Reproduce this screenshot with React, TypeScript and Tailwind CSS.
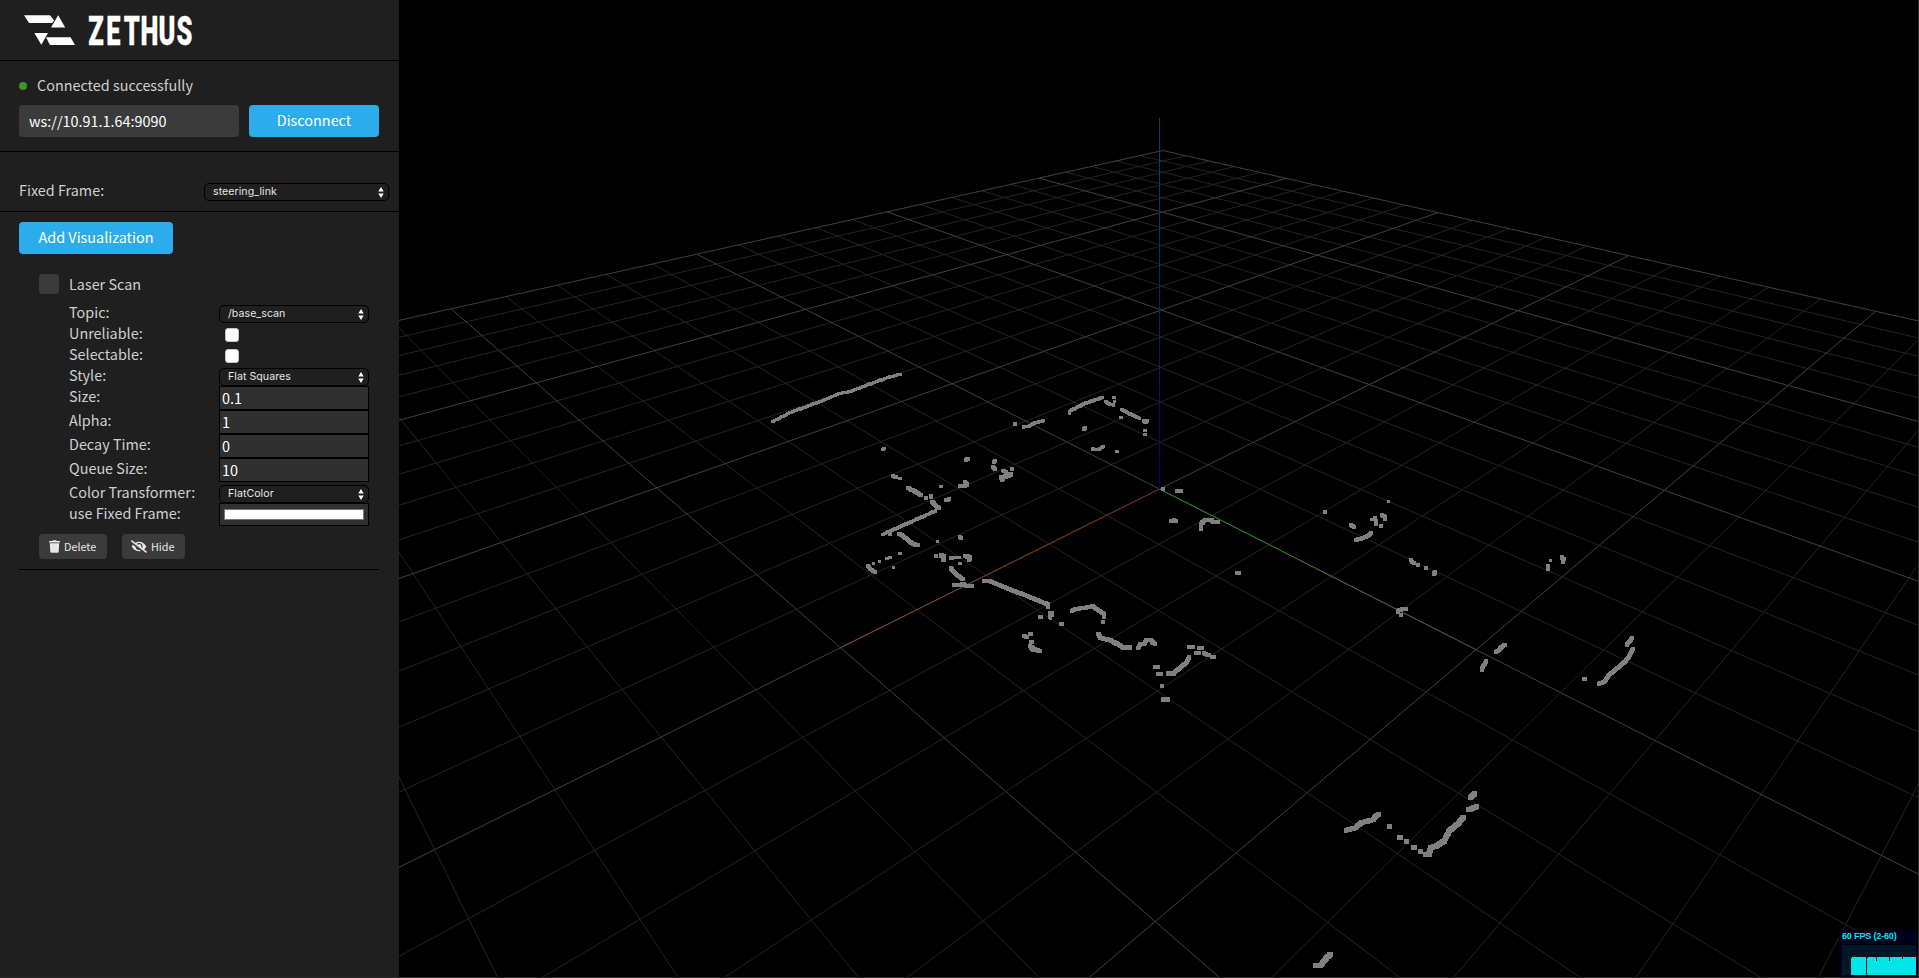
import React from "react";
import { FaEyeSlash, FaTrash } from "react-icons/fa";

/* ---------- 3D scene ---------- */

const HALF = 15;
const SIN = 0.005;
const COS = 1;

function project(a: number, b: number): [number, number] {
  const t = -(a + b) / 2;
  const s = (a - b) / 2;
  const depth = t * COS - s * SIN;
  const side = s * COS + t * SIN;
  const w = 0.01975 + 0.001638 * depth;
  return [1159.5 + (1.99 * side) / w, 489 - depth / w];
}

function segment(p: [number, number], q: [number, number]) {
  return `M${p[0].toFixed(2)} ${p[1].toFixed(2)}L${q[0].toFixed(2)} ${q[1].toFixed(2)}`;
}

function gridPath(major: boolean) {
  let d = "";
  for (let i = -HALF; i <= HALF; i++) {
    if ((i % 5 === 0) !== major) continue;
    const endB = Math.min(HALF, (19 - i * (COS + SIN)) / (COS - SIN));
    const endA = Math.min(HALF, (19 - i * (COS - SIN)) / (COS + SIN));
    d += segment(project(i, -HALF), project(i, endB));
    d += segment(project(-HALF, i), project(endA, i));
  }
  return d;
}

type Stroke = [number, string];
type Tile = { x: number; y: number; strokes: Stroke[] };

/* Laser returns, grouped in tiles; coordinates are thirds of a pixel. */
const tiles: Tile[] = [
  {
    x: 760,
    y: 360,
    strokes: [
      [8, "38,185 90,158 180,125 240,100 270,95 330,72 385,52 420,43"],
      [9, "368,269 372,265"],
      [8, "764,192 765,192"],
      [8, "790,201 805,200 820,190 850,182"],
      [9, "928,160 928,154 970,132 1026,113"],
      [8, "1038,125 1050,134 1060,135"],
      [9, "1062,112 1064,112"],
      [8, "1063,125 1064,125"],
      [9, "1086,149 1110,162 1138,175"],
      [8, "1082,173 1084,173"],
      [10, "1151,184 1162,184"],
      [8, "1154,188 1158,188"],
      [8, "1154,212 1155,212"],
      [8, "1154,223 1155,223"],
      [10, "971,208 975,204"],
      [9, "998,267 1015,269 1031,259"],
      [9, "1071,275 1073,275"],
      [10, "618,299 624,297"],
      [10, "702,307 705,302"],
      [10, "698,322 705,326"],
      [9, "727,331 738,336"],
      [10, "755,326 756,326"],
      [12, "724,352 738,349 752,343"],
      [11, "727,359 730,358"],
      [8, "600,378 601,378"],
      [11, "615,366 622,373"],
      [9, "612,378 622,377"],
      [9, "542,380 544,380"],
      [10, "399,349 408,351"],
      [9, "419,356 420,356"],
      [11, "445,383 483,406"],
      [11, "497,415 498,415"],
      [11, "512,409 513,411"],
      [11, "517,425 525,435 536,445"],
      [10, "557,421 566,418"],
      [9, "526,453 369,523"],
      [10, "389,523 390,523"],
      [11, "416,521 430,528 455,550 473,556"],
      [8, "532,545 533,545"],
      [11, "601,531 602,533"],
      [10, "528,587 529,587"],
      [13, "544,587 552,590"],
      [11, "550,599 551,599"],
      [9, "573,594 597,592"],
      [11, "615,589 630,590 628,600"],
      [9, "600,610 601,610"],
      [11, "572,625 590,645 610,658"],
      [11, "582,676 600,675 612,672 620,679 636,679"],
      [9, "340,610 341,610"],
      [9, "358,604 359,604"],
      [9, "380,596 381,596"],
      [9, "390,592 391,592"],
      [9, "420,581 421,581"],
      [9, "400,622 401,622"],
      [10, "324,619 335,631 345,636"],
    ],
  },
  {
    x: 960,
    y: 560,
    strokes: [
      [11, "73,62 90,64 160,92 262,132"],
      [11, "264,133 264,142"],
      [10, "241,170 242,170"],
      [14, "271,162 273,162"],
      [9, "270,173 271,174"],
      [11, "304,191 305,191"],
      [11, "336,152 350,147 400,139 410,148 430,160 432,170"],
      [11, "428,185 429,185"],
      [11, "191,229 200,230"],
      [11, "211,222 212,222"],
      [10, "214,245 215,245"],
      [12, "210,258 220,268 240,273"],
      [12, "416,222 422,234 450,240 490,262 510,263"],
      [11, "534,263 541,253 553,253 558,240 572,241 586,252"],
      [11, "687,261 699,261"],
      [11, "716,265 726,265"],
      [11, "707,279 717,279"],
      [11, "733,279 741,285 748,286"],
      [11, "756,292 761,292"],
      [11, "688,291 680,306 650,331 643,340"],
      [12, "624,341 640,340"],
      [11, "586,321 593,321"],
      [11, "595,341 602,341"],
      [11, "606,379 607,379"],
      [12, "611,419 624,419"],
      [11, "832,38 837,38"],
    ],
  },
  {
    x: 1160,
    y: 470,
    strokes: [
      [10, "8,58 9,58"],
      [11, "51,62 63,62"],
      [10, "34,154 42,150 48,154"],
      [11, "122,176 122,162 136,151 155,151 162,157 175,157"],
      [11, "232,309 237,309"],
      [11, "495,126 496,127"],
      [9, "685,94 686,95"],
      [10, "572,165 582,171"],
      [9, "635,149 636,149"],
      [8, "645,144 646,144"],
      [10, "648,152 648,162"],
      [10, "665,135 675,141 676,146"],
      [9, "663,168 664,168"],
      [11, "588,211 610,203 625,198 633,190"],
      [10, "752,270 762,280"],
      [10, "774,286 775,286"],
      [10, "797,295 798,295"],
      [11, "825,306 822,313"],
      [11, "713,427 716,420 725,418 739,418"],
      [10, "722,435 723,435"],
      [9, "1171,272 1172,272"],
      [11, "1165,289 1163,296"],
      [10, "1205,261 1211,268 1210,276"],
      [11, "1035,524 1025,530 1015,543 1007,545"],
      [11, "979,574 972,585 965,599"],
      [11, "1416,504 1408,515 1400,524"],
      [11, "1418,536 1410,555 1395,575 1345,618 1335,634 1318,641"],
      [13, "1273,627 1274,627"],
    ],
  },
  {
    x: 1280,
    y: 770,
    strokes: [
      [13, "198,181 225,174 245,158 280,149 288,137 296,134"],
      [14, "328,170 329,170"],
      [14, "360,202 361,202"],
      [14, "379,214 380,214"],
      [14, "401,232 402,232"],
      [14, "421,244 422,244"],
      [14, "438,254 447,252 453,232 470,228 492,214 508,182 535,160 549,143"],
      [14, "567,119 589,110"],
      [14, "572,83 583,72"],
      [14, "107,587 122,586 138,565 150,554"],
    ],
  },
];

/* Each return is a flat square: stamp squares along the stroke. */
function stamp([width, points]: Stroke) {
  const size = width + 1.2;
  const pts = points.split(" ").map((p) => p.split(",").map(Number));
  let d = "";
  for (let i = 1; i < pts.length; i++) {
    const [x0, y0] = pts[i - 1];
    const [x1, y1] = pts[i];
    const steps = Math.max(1, Math.ceil(Math.hypot(x1 - x0, y1 - y0) / 4));
    for (let k = 0; k <= steps; k++) {
      const x = x0 + ((x1 - x0) * k) / steps - size / 2;
      const y = y0 + ((y1 - y0) * k) / steps - size / 2;
      d += `M${x.toFixed(1)} ${y.toFixed(1)}h${size}v${size}h${-size}z`;
    }
  }
  return d;
}

function Viewport() {
  const origin = project(0, 0);
  const red = project(0, 5);
  const green = project(5, 0);
  return (
    <svg className="block h-full w-full" viewBox="399 0 1520 978" fill="none">
      <defs>
        <linearGradient id="ax" gradientUnits="userSpaceOnUse" x1={origin[0]} y1={origin[1]} x2={red[0]} y2={red[1]}>
          <stop offset="0" stopColor="#801c1c" />
          <stop offset="0.5" stopColor="#7c3c1c" />
          <stop offset="1" stopColor="#80520e" />
        </linearGradient>
        <linearGradient id="ay" gradientUnits="userSpaceOnUse" x1={origin[0]} y1={origin[1]} x2={green[0]} y2={green[1]}>
          <stop offset="0" stopColor="#1f8f1f" />
          <stop offset="0.55" stopColor="#3a7528" />
          <stop offset="1" stopColor="#45531f" />
        </linearGradient>
        <linearGradient id="az" gradientUnits="userSpaceOnUse" x1="0" y1="489" x2="0" y2="118">
          <stop offset="0" stopColor="#000074" />
          <stop offset="0.5" stopColor="#0a246a" />
          <stop offset="1" stopColor="#00466a" />
        </linearGradient>
      </defs>
      <path d={gridPath(false)} stroke="#232323" />
      <path d={gridPath(true)} stroke="#404040" />
      <path d={segment(origin, red)} stroke="url(#ax)" />
      <path d={segment(origin, green)} stroke="url(#ay)" />
      <rect x="1159" y="118" width="1" height="371" fill="url(#az)" />
      {tiles.map((tile) => (
        <path
          key={`${tile.x}-${tile.y}`}
          transform={`translate(${tile.x} ${tile.y}) scale(0.33333)`}
          fill="#808080"
          shapeRendering="crispEdges"
          d={tile.strokes.map(stamp).join("")}
        />
      ))}
    </svg>
  );
}

function Stats() {
  return (
    <div className="absolute right-0 bottom-0 h-12 w-20 bg-[#00001c] px-[3px] pb-[3px]">
      <div className="h-[15px] pt-px font-['Liberation_Sans'] text-[9px] leading-[11px] font-bold tracking-[-0.15px] whitespace-nowrap text-[#00e5e5]">
        60 FPS (2-60)
      </div>
      <svg className="block h-[30px] w-[74px]" viewBox="0 0 74 30" shapeRendering="crispEdges">
        <rect width="74" height="30" fill="#001726" />
        <path fill="#00e5e5" d="M9 13H10V12H24V30H9Z M25 13H26V12H34V16H35V12H47V16H48V12H60V14H61V12H74V30H25Z" />
      </svg>
    </div>
  );
}

/* ---------- Sidebar ---------- */

function Logo() {
  return (
    <svg className="block h-[60px] w-[220px]" viewBox="0 0 220 60" fill="#fff">
      <path d="M24 15.3H50L54.2 20.6 52 23H29Z" />
      <path d="M58.2 15.3 65.2 27.5H51Z" />
      <path d="M34.4 33H48L41.3 44.8Z" />
      <path d="M46 37.3H70.6L75 45H50Z" />
      <text
        transform="scale(0.62 1)"
        x="142.5 171.5 199.5 226.5 255.5 284.5"
        y="44.6"
        fontFamily="Roboto, sans-serif"
        fontWeight="900"
        fontSize="41"
        stroke="#fff"
        strokeWidth="0.3"
      >
        ZETHUS
      </text>
    </svg>
  );
}

function Select({ value, className = "" }: { value: string; className?: string }) {
  return (
    <div
      className={`flex h-[18px] items-center justify-between rounded-[5px] border border-black bg-[#1f1f1f] pr-1 pl-2 font-['Inter'] text-[10.6px] leading-4 tracking-[0.05px] text-[#e6e6e6] ${className}`}
    >
      <span>{value}</span>
      <svg className="h-[11px] w-[6px]" viewBox="0 0 6 11" fill="#fff">
        <path d="M3 0 5.7 4.4H.3ZM3 11 .3 6.6H5.7Z" />
      </svg>
    </div>
  );
}

function NumberField({ value }: { value: string }) {
  return (
    <div className="h-6 w-[150px] border border-black bg-[#303030] pl-[2px] leading-[21px] text-white">{value}</div>
  );
}

function Row({ label, tall = false, children }: { label: string; tall?: boolean; children: React.ReactNode }) {
  return (
    <div className={`flex ${tall ? "h-6" : "h-[21px]"}`}>
      <div className="w-[150px] leading-[19px] whitespace-nowrap">{label}</div>
      <div className="flex flex-col justify-end">{children}</div>
    </div>
  );
}

function Check() {
  return <div className="mb-[2px] ml-[6px] size-[14px] rounded-[3px] border border-[#c4c4c4] bg-white" />;
}

function SmallButton({ icon, label, className }: { icon: React.ReactNode; label: string; className: string }) {
  return (
    <button className={`flex h-[25px] items-center rounded bg-[#3b3b3b] text-[10.8px] text-[#e8e8e8] ${className}`}>
      {icon}
      {label}
    </button>
  );
}

export default function App() {
  return (
    <div className="relative flex h-[978px] w-[1919px] overflow-hidden bg-black font-['Noto_Sans_CJK_SC','Open_Sans',sans-serif] text-[14.4px] text-[#cfcfcf]">
      <aside className="flex w-[399px] shrink-0 flex-col bg-[#1f1f1f]">
        <header className="h-[61px] border-b border-black">
          <Logo />
        </header>

        <section className="h-[91px] border-b border-black pt-[14px] pl-[19px]">
          <div className="flex h-[22px] items-center">
            <span className="mr-[10px] size-2 rounded-full bg-[#3c9520]" />
            <span className="pb-[2px]">Connected successfully</span>
          </div>
          <div className="mt-2 flex gap-[10px]">
            <div className="h-8 w-[220px] rounded bg-[#3b3b3b] pl-[10px] leading-[31px] text-white">ws://10.91.1.64:9090</div>
            <button className="h-8 w-[130px] rounded bg-[#2daceb] pb-[2px] leading-[30px] text-white">Disconnect</button>
          </div>
        </section>

        <section className="flex h-[60px] border-b border-black pt-[29px] pl-[19px]">
          <div className="w-[185px] leading-[18px]">Fixed Frame:</div>
          <Select value="steering_link" className="mt-[2px] w-[185px]" />
        </section>

        <section className="pt-[10px] pl-[19px]">
          <button className="h-8 w-[154px] rounded bg-[#2daceb] pb-[2px] leading-[30px] text-white">Add Visualization</button>
          <div className="mt-5 w-[360px] border-b border-black pl-5">
            <div className="flex h-5 items-start">
              <span className="mr-[10px] size-5 rounded bg-[#3b3b3b]" />
              <span className="leading-[19px]">Laser Scan</span>
            </div>
            <div className="mt-2 pl-[30px]">
              <Row label="Topic:"><Select value="/base_scan" className="w-[150px]" /></Row>
              <Row label="Unreliable:"><Check /></Row>
              <Row label="Selectable:"><Check /></Row>
              <Row label="Style:"><Select value="Flat Squares" className="w-[150px]" /></Row>
              <Row label="Size:" tall><NumberField value="0.1" /></Row>
              <Row label="Alpha:" tall><NumberField value="1" /></Row>
              <Row label="Decay Time:" tall><NumberField value="0" /></Row>
              <Row label="Queue Size:" tall><NumberField value="10" /></Row>
              <Row label="Color Transformer:"><Select value="FlatColor" className="w-[150px]" /></Row>
              <Row label="use Fixed Frame:" tall>
                <div className="mb-px h-[23px] w-[150px] border border-black bg-[#303030] px-1 pt-[5px]">
                  <div className="h-[11px] border border-[#777] bg-white" />
                </div>
              </Row>
            </div>
            <div className="mt-[7px] flex gap-[15px] pb-[10px]">
              <SmallButton className="w-[68px] pl-[10px]" icon={<FaTrash className="mr-1 h-[13px] w-[11px]" />} label="Delete" />
              <SmallButton className="w-[63px] pl-[9px]" icon={<FaEyeSlash className="mr-1 h-[13px] w-[16px]" />} label="Hide" />
            </div>
          </div>
        </section>
      </aside>

      <main className="h-[978px] w-[1520px]">
        <Viewport />
      </main>

      <Stats />
      <div className="pointer-events-none absolute inset-0 border-r border-b border-[#2c2a2a]" />
    </div>
  );
}
